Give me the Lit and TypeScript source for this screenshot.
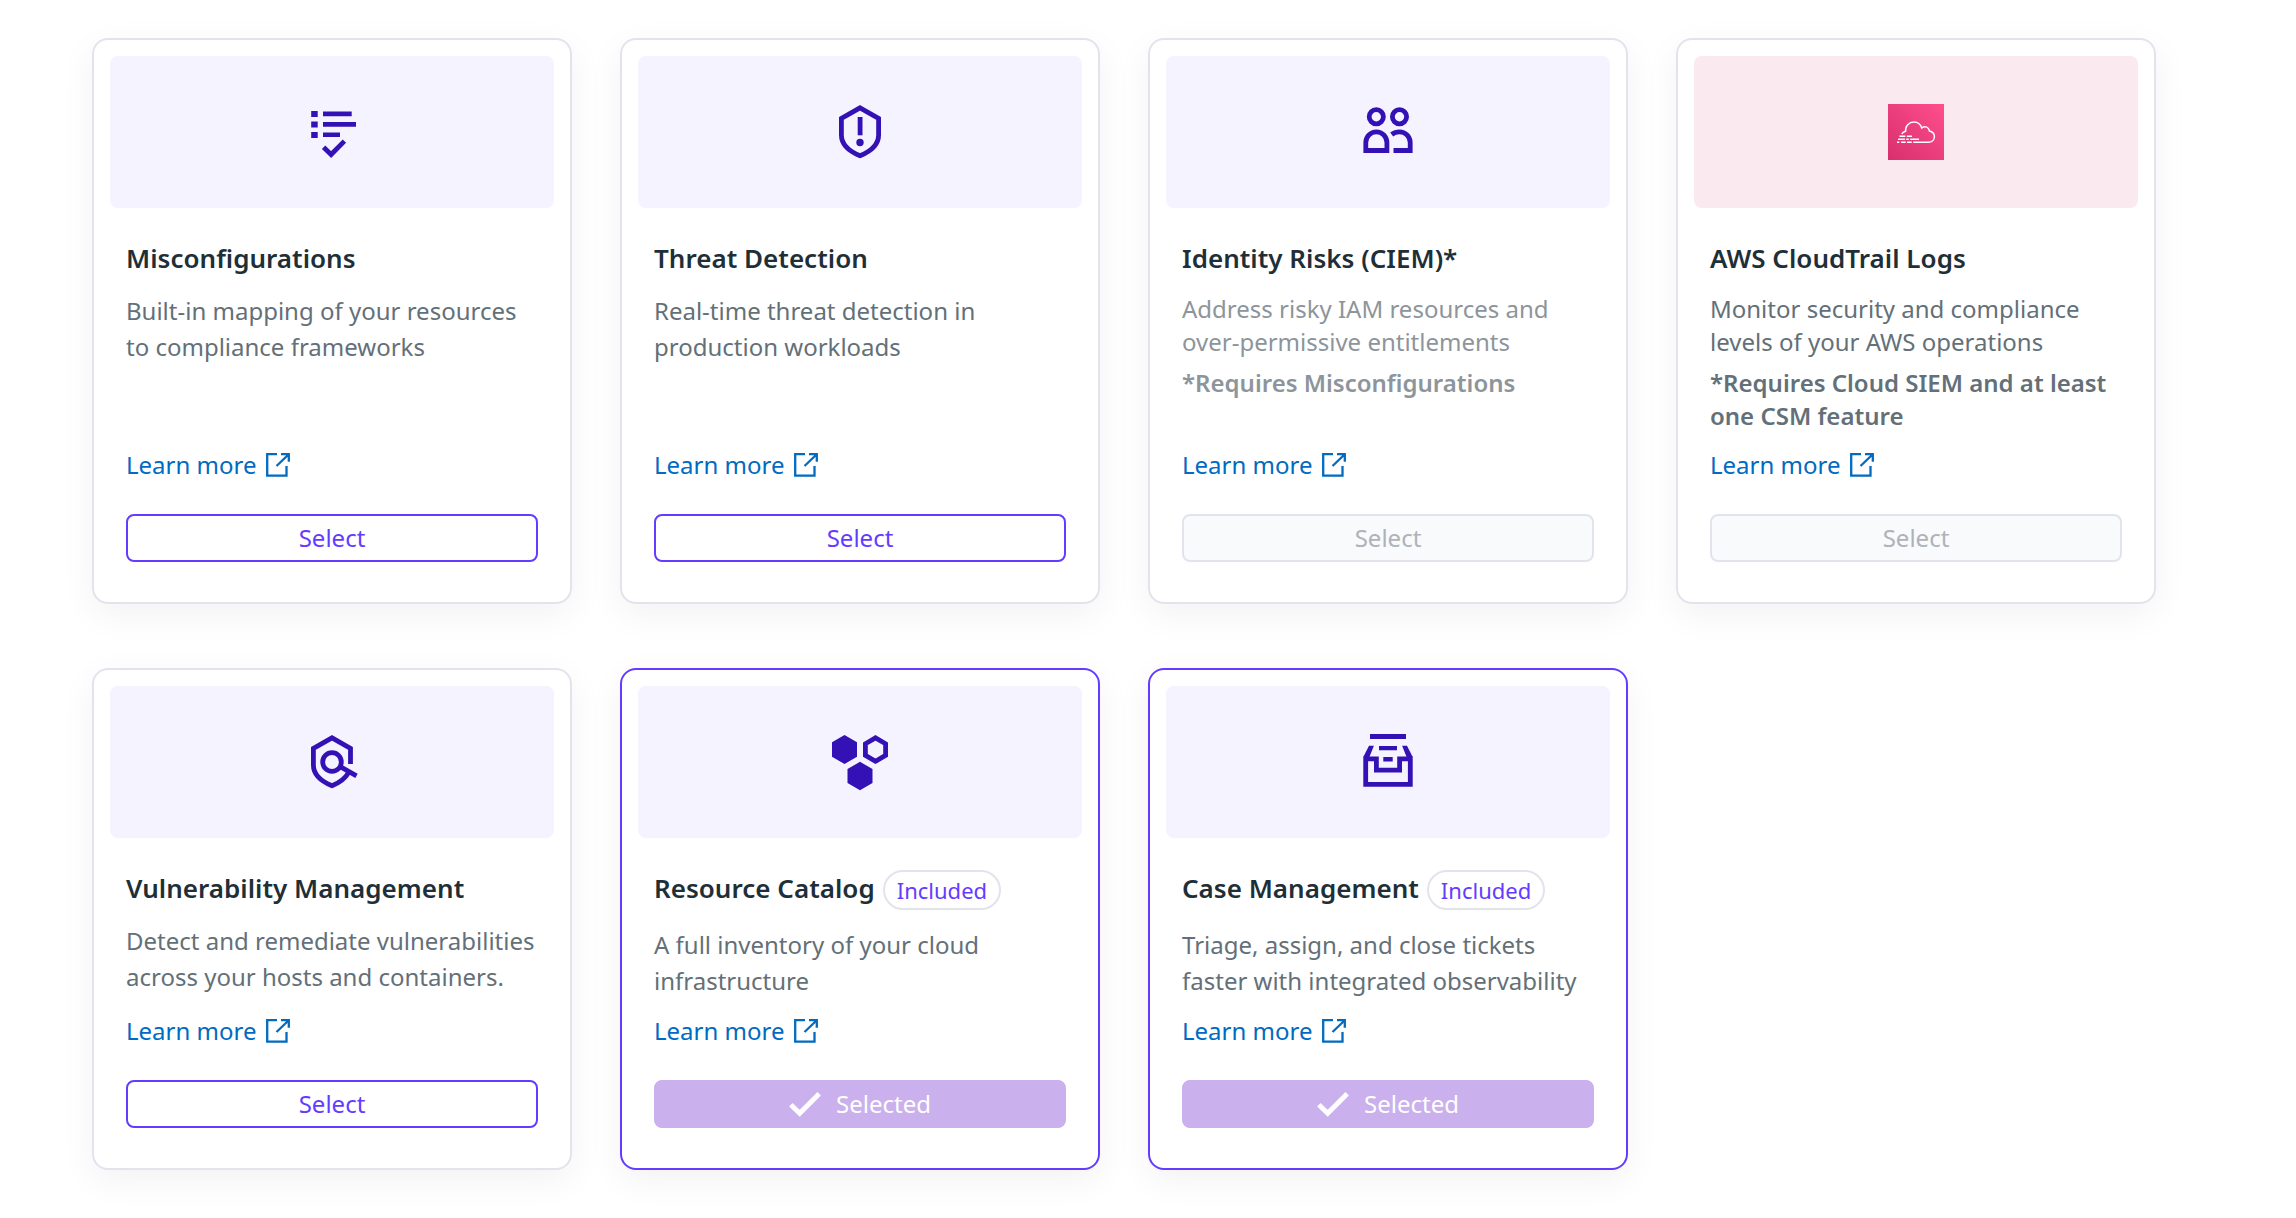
import { LitElement, html, css, nothing } from "lit";
import { customElement, property } from "lit/decorators.js";
import { classMap } from "lit/directives/class-map.js";

type State = "select" | "disabled" | "selected";

interface Feature {
  title: string;
  text: string[];
  note?: string[];
  icon: string;
  state: State;
  compact?: boolean;
  muted?: boolean;
  included?: boolean;
}

const icons: Record<string, unknown> = {
  checklist: html`<svg viewBox="0 0 84 84">
    <path class="fill" d="M21.2 21h6.5v6h-6.5zM21.2 31.5h6.5v6h-6.5zM21.2 42h6.5v6h-6.5zM33 21.6h28.7v4.600H33zM33 32h33v4.800H33zM33 42.400h17v4.600H33z" />
    <path class="line" d="M33.600 57.200l7.500 7.300 13.300-13.400" />
  </svg>`,
  shield: html`<svg viewBox="3 0 84 84">
    <path class="line" d="M45 17.800L63.600 28.400V45c0 9-7 16-18.600 20.700C33.400 61 26.400 54 26.400 45V28.400z" />
    <path class="fill" d="M42.700 27h4.800v18.300h-4.800z" />
    <circle class="fill" cx="45" cy="52.5" r="3.7" />
  </svg>`,
  people: html`<svg viewBox="3 0 84 84">
    <circle class="line" cx="33.300" cy="26.800" r="7.100" />
    <circle class="line" cx="56.500" cy="26.800" r="7.100" />
    <path class="line" d="M22.800 60.500v-8a10.550 10.600 0 0 1 21.100 0v8z" />
    <path class="line" d="M48.700 44.500c2.300-1.800 5-2.600 7.800-2.600a10.700 10.600 0 0 1 10.700 10.600v8H50.500" />
  </svg>`,
  cloudtrail: html`<svg viewBox="4 0 84 84">
    <defs>
      <linearGradient id="pink" x1="0" y1="1" x2="1" y2="0">
        <stop offset="0" stop-color="#d72f6e" />
        <stop offset="1" stop-color="#ff4f8b" />
      </linearGradient>
    </defs>
    <path fill="url(#pink)" d="M18 14h56v56H18z" />
    <path class="thin" d="M31.800 44c.5-.9 1.700-2 3.800-2.700-.5-5.300 3.400-9.300 8.400-9.300 4 0 6.600 2.500 7.800 6 3.200-2.600 7.300-.7 7.600 2.900 3.400.7 5 3.200 5 5.600 0 3.400-2.600 5.700-6 5.700H43.200M29.500 46.200h5.800M36.800 46.200h5.200M28 49.200h7M36.200 49.200h2.600M40.200 49.200H49M27 52.200h2.300M31 52.200h4.700M37 52.200h4.800" />
  </svg>`,
  scan: html`<svg viewBox="0 0 84 84">
    <path class="line" d="M60.500 44V28.400L42 17.800 23.400 28.400V45c0 9 7 16 18.600 20.700 7.800-3.200 13.300-7.400 16.200-12.600" />
    <circle class="line" cx="42" cy="42" r="9.300" />
    <path class="line" d="M50.200 46.700l16.300 9.100" />
  </svg>`,
  hexes: html`<svg viewBox="3 0 84 84">
    <path class="fill" d="M29.500 15L42 22.300v14.400L29.500 44 17 36.700V22.300zM45 41.800l12.500 7.200v14L45 70.200 32.500 63V49z" />
    <path class="line" d="M60.500 17.900l10.100 5.900v11.600l-10.100 5.900-10.100-5.900V23.800z" />
  </svg>`,
  drawer: html`<svg viewBox="3 0 84 84">
    <path class="fill" d="M27 14h36v5H27zM36 26h18v4.300H36zM40.300 37h9.400v4.600h-9.400zM26 25.700h4.900L26.400 37h-6.100zM64 25.700h-4.900L63.600 37h6.100z" />
    <path class="line" d="M22.700 38.900h10.700v11.200h23.200V38.900h10.700v25.400H22.700z" />
  </svg>`,
};

const features: Feature[] = [
  { title: "Misconfigurations", icon: "checklist", state: "select", text: ["Built-in mapping of your resources", "to compliance frameworks"] },
  { title: "Threat Detection", icon: "shield", state: "select", text: ["Real-time threat detection in", "production workloads"] },
  { title: "Identity Risks (CIEM)*", icon: "people", state: "disabled", compact: true, muted: true, text: ["Address risky IAM resources and", "over-permissive entitlements"], note: ["*Requires Misconfigurations"] },
  { title: "AWS CloudTrail Logs", icon: "cloudtrail", state: "disabled", compact: true, text: ["Monitor security and compliance", "levels of your AWS operations"], note: ["*Requires Cloud SIEM and at least", "one CSM feature"] },
  { title: "Vulnerability Management", icon: "scan", state: "select", text: ["Detect and remediate vulnerabilities", "across your hosts and containers."] },
  { title: "Resource Catalog", icon: "hexes", state: "selected", included: true, text: ["A full inventory of your cloud", "infrastructure"] },
  { title: "Case Management", icon: "drawer", state: "selected", included: true, text: ["Triage, assign, and close tickets", "faster with integrated observability"] },
];

const lines = (items: string[]) => items.map((t, i) => html`${i ? html`<br />` : nothing}${t}`);

@customElement("feature-card")
export class FeatureCard extends LitElement {
  @property({ attribute: false }) feature!: Feature;

  static styles = css`
    :host { display: flex; }
    .card {
      box-sizing: border-box;
      flex: 1;
      display: flex;
      flex-direction: column;
      padding: 16px;
      border: 2px solid #e1e4ed;
      border-radius: 16px;
      background: #fff;
      box-shadow: 0 10px 36px rgba(0, 0, 0, 0.055);
    }
    .card.selected { border-color: #643cff; }
    .banner {
      height: 152px;
      flex: none;
      display: flex;
      align-items: center;
      justify-content: center;
      border-radius: 8px;
      background: #f5f3ff;
    }
    .banner.pink { background: #fae9ee; }
    .banner svg { width: 84px; height: 84px; }
    .fill { fill: #3311b5; }
    .line { fill: none; stroke: #3311b5; stroke-width: 4.8; }
    .thin { fill: none; stroke: #fff; stroke-width: 1.5; }
    .body {
      flex: 1;
      display: flex;
      flex-direction: column;
      padding: 32px 16px 24px;
    }
    .head { display: flex; align-items: flex-start; gap: 8px; height: 36px; }
    .head.tagged { height: 40px; }
    .title { margin: 0; font-size: 26px; line-height: 36px; font-weight: 600; letter-spacing: 0.02px; color: #1f2f38; white-space: nowrap; }
    .tag {
      box-sizing: border-box;
      height: 40px;
      padding: 0 12px;
      border: 2px solid #e1e4ed;
      border-radius: 20px;
      font-size: 22px;
      line-height: 37px;
      color: #643cff;
    }
    .text, .note { margin: 0; font-size: 24px; line-height: 36px; color: #637078; white-space: nowrap; }
    .text { margin-top: 17px; }
    .compact .text, .compact .note { line-height: 33px; }
    .compact .text { margin-top: 16px; }
    .note { margin-top: 8px; font-weight: 600; }
    .muted .text, .muted .note { color: #8d959b; }
    .link {
      display: flex;
      align-items: center;
      align-self: flex-start;
      gap: 9px;
      margin-top: auto;
      font-size: 24px;
      line-height: 36px;
      color: #006bc2;
      text-decoration: none;
    }
    .link svg { width: 24px; height: 24px; }
    .button {
      box-sizing: border-box;
      flex: none;
      height: 48px;
      margin-top: 31px;
      display: flex;
      align-items: center;
      justify-content: center;
      gap: 15px;
      padding: 0;
      border: 2px solid #643cff;
      border-radius: 8px;
      background: #fff;
      font: inherit;
      font-size: 24px;
      line-height: 36px;
      color: #643cff;
    }
    .button.disabled { border-color: #e1e4ed; background: #f9fafc; color: #adb3b8; }
    .button.selected { border-color: #cab0ed; background: #cab0ed; color: #fff; }
    .button svg { width: 32px; height: 25px; }
  `;

  render() {
    const f = this.feature;
    return html`
      <article class=${classMap({ card: true, selected: f.state === "selected", compact: !!f.compact, muted: !!f.muted })}>
        <div class=${classMap({ banner: true, pink: f.icon === "cloudtrail" })}>${icons[f.icon]}</div>
        <div class="body">
          <div class=${classMap({ head: true, tagged: !!f.included })}>
            <h3 class="title">${f.title}</h3>
            ${f.included ? html`<span class="tag">Included</span>` : nothing}
          </div>
          <p class="text">${lines(f.text)}</p>
          ${f.note ? html`<p class="note">${lines(f.note)}</p>` : nothing}
          <a class="link">Learn more
            <svg viewBox="0 0 24 24" fill="none" stroke="currentColor" stroke-width="2.3">
              <path d="M11 1.200H1.200v21.500h19.300V13M10.500 13L22 2M15 1.200h7.800v7.600" />
            </svg>
          </a>
          <button class="button ${f.state}" ?disabled=${f.state === "disabled"}>
            ${f.state === "selected"
              ? html`<svg viewBox="0 0 32 25" fill="none" stroke="currentColor" stroke-width="5"><path d="M1.800 12.800l8.900 8.400L30.200 1.800" /></svg>Selected`
              : "Select"}
          </button>
        </div>
      </article>
    `;
  }
}

@customElement("app-root")
export class AppRoot extends LitElement {
  static styles = css`
    :host {
      display: block;
      box-sizing: border-box;
      height: 1218px;
      overflow: hidden;
      background: #fff;
      font-family: "Noto Sans", sans-serif;
    }
    .grid {
      display: grid;
      grid-template-columns: repeat(4, 480px);
      grid-template-rows: 566px 502px;
      gap: 64px 48px;
      padding: 38px 92px 48px;
    }
  `;

  render() {
    return html`<main class="grid">${features.map((f) => html`<feature-card .feature=${f}></feature-card>`)}</main>`;
  }
}
